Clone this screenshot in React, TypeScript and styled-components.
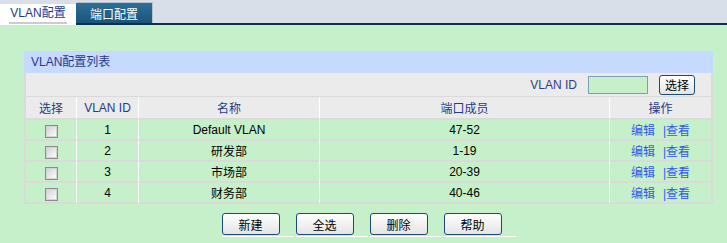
import React from "react";
import styled, { createGlobalStyle } from "styled-components";

const Global = createGlobalStyle`
  html, body { margin: 0; padding: 0; }
  body {
    background: #c5f0c9;
    font-family: "Liberation Sans", "Noto Sans CJK SC", sans-serif;
    font-size: 12px;
  }
`;

const TabBar = styled.div`
  display: flex;
  align-items: flex-end;
  height: 25px;
  background: #d9dfe9;
`;

const ActiveTab = styled.div`
  width: 76px;
  height: 21px;
  background: #fff;
  display: flex;
  justify-content: center;
  align-items: flex-end;
  box-sizing: border-box;
  padding-bottom: 1px;
`;

const ActiveLabel = styled.span`
  color: #27398a;
  font-size: 12px;
  line-height: 17px;
  border-bottom: 2px solid #c9ccd3;
  padding: 0 1px;
`;

const Tab = styled.div`
  width: 76px;
  height: 22px;
  box-sizing: border-box;
  background: linear-gradient(#2e6f97, #1a5479);
  border-bottom: 2px solid #0b3048;
  color: #fff;
  display: flex;
  justify-content: center;
  align-items: center;
  box-shadow: 1px -1px 0 #b6c1cd;
`;

const TabRest = styled.div`
  flex: 1;
  height: 2px;
  background: #0b3048;
`;

const Content = styled.div`
  padding: 26px 0 0 24px;
  width: 689px;
`;

const Title = styled.div`
  height: 22px;
  line-height: 22px;
  background: #c6d9fe;
  color: #27398a;
  padding-left: 7px;
`;

const TableBox = styled.div`
  border-left: 2px solid #dadada;
  border-right: 2px solid #dadada;
`;

const FilterRow = styled.div`
  height: 23px;
  background: #ebebeb;
  display: flex;
  justify-content: flex-end;
  align-items: center;
  padding-right: 16px;
  border-bottom: 1px solid #dadada;
`;

const FilterLabel = styled.span`
  color: #2c3f8f;
  margin-right: 11px;
`;

const FilterInput = styled.input`
  width: 60px;
  height: 18px;
  box-sizing: border-box;
  border: 1px solid #7f9db9;
  background: #c5f0c9;
  margin: 0 11px 0 0;
  padding: 0;
`;

const Button = styled.button<{ $w?: number; $h?: number }>`
  width: ${(p) => p.$w ?? 58}px;
  height: ${(p) => p.$h ?? 22}px;
  box-sizing: border-box;
  border: 1px solid #1b4a7a;
  border-radius: 3px;
  background: linear-gradient(#ffffff, #e4e4e4);
  color: #000;
  font-family: "Liberation Sans", "Noto Sans CJK SC", sans-serif;
  font-size: 12px;
  padding: 0;
  cursor: pointer;
`;

const Table = styled.table`
  width: 100%;
  border-collapse: separate;
  border-spacing: 0;
  table-layout: fixed;
`;

const Th = styled.th`
  height: 21px;
  padding: 0;
  background: #ebebeb;
  color: #27398a;
  font-weight: normal;
  font-size: 12px;
  text-align: center;
  border-bottom: 2px solid #dadada;
  & + & { border-left: 1px solid #fff; }
`;

const Td = styled.td`
  height: 19px;
  padding: 0;
  color: #000;
  font-size: 12px;
  text-align: center;
  vertical-align: middle;
  border-bottom: 2px solid #dadada;
  & + & { border-left: 1px solid #fff; }
`;

const Check = styled.input`
  appearance: none;
  -webkit-appearance: none;
  width: 13px;
  height: 13px;
  margin: 3px 0 0 0;
  box-sizing: border-box;
  border: 1px solid #8c8c8c;
  box-shadow: inset 0 0 0 1px #d4d4d4;
  background: linear-gradient(135deg, #cfcfcf, #ffffff);
  vertical-align: top;
`;

const Link = styled.a<{ $gap?: boolean }>`
  color: #3458f0;
  text-decoration: none;
  cursor: pointer;
  margin-left: ${(p) => (p.$gap ? 8 : 0)}px;
`;

const Actions = styled.div`
  display: flex;
  justify-content: center;
  gap: 2px;
  margin-top: 9px;
`;

const ActionCell = styled.div`
  width: 72px;
  padding-bottom: 1px;
  border-bottom: 1px solid #fff;
`;

const rows = [
  { id: 1, name: "Default VLAN", ports: "47-52" },
  { id: 2, name: "研发部", ports: "1-19" },
  { id: 3, name: "市场部", ports: "20-39" },
  { id: 4, name: "财务部", ports: "40-46" },
];

export default function App() {
  return (
    <>
      <Global />
      <TabBar>
        <ActiveTab>
          <ActiveLabel>VLAN配置</ActiveLabel>
        </ActiveTab>
        <Tab>端口配置</Tab>
        <TabRest />
      </TabBar>
      <Content>
        <Title>VLAN配置列表</Title>
        <TableBox>
          <FilterRow>
            <FilterLabel>VLAN ID</FilterLabel>
            <FilterInput type="text" />
            <Button $w={36} $h={20}>选择</Button>
          </FilterRow>
          <Table>
            <colgroup>
              <col style={{ width: 50 }} />
              <col style={{ width: 62 }} />
              <col style={{ width: 181 }} />
              <col style={{ width: 290 }} />
              <col />
            </colgroup>
            <thead>
              <tr>
                <Th>选择</Th>
                <Th>VLAN ID</Th>
                <Th>名称</Th>
                <Th>端口成员</Th>
                <Th>操作</Th>
              </tr>
            </thead>
            <tbody>
              {rows.map((r) => (
                <tr key={r.id}>
                  <Td>
                    <Check type="checkbox" />
                  </Td>
                  <Td>{r.id}</Td>
                  <Td>{r.name}</Td>
                  <Td>{r.ports}</Td>
                  <Td>
                    <Link>编辑</Link>
                    <Link $gap>|查看</Link>
                  </Td>
                </tr>
              ))}
            </tbody>
          </Table>
        </TableBox>
        <Actions>
          {["新建", "全选", "删除", "帮助"].map((t) => (
            <ActionCell key={t}>
              <Button>{t}</Button>
            </ActionCell>
          ))}
        </Actions>
      </Content>
    </>
  );
}
